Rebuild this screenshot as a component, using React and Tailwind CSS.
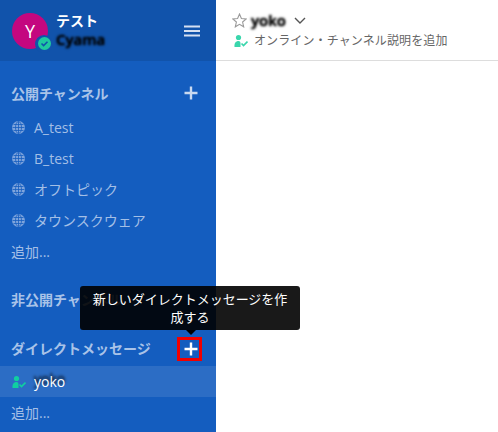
import React from 'react';

const GlobeIcon = () => (
  <svg width="13" height="13" viewBox="0 0 13 13" className="shrink-0">
    <circle cx="6.5" cy="6.5" r="6.5" fill="#7ea4dc" />
    <g stroke="#145dbf" strokeWidth="0.8" fill="none">
      <ellipse cx="6.5" cy="6.5" rx="3" ry="6" />
      <path d="M6.5 0.5V12.5M0.5 6.5H12.5M1.5 3.5H11.5M1.5 9.5H11.5" />
    </g>
  </svg>
);

const PlusIcon = ({ color = '#c9d9f0' }) => (
  <svg width="14" height="14" viewBox="0 0 14 14">
    <path d="M7 0.5V13.5M0.5 7H13.5" stroke={color} strokeWidth="2.4" />
  </svg>
);

const OnlineIcon = ({ color = '#10cfa0' }) => (
  <svg width="14" height="14" viewBox="0 0 14 14" className="shrink-0">
    <circle cx="4.5" cy="3.5" r="2.6" fill={color} />
    <path d="M0.5 13C0 9 2 7 4.5 7C6 7 6.5 8 6.5 9.5V13Z" fill={color} />
    <path d="M7.5 9.5L9.5 11.5L13.5 7.5" stroke={color} strokeWidth="1.7" fill="none" />
  </svg>
);

const channels = ['A_test', 'B_test', 'オフトピック', 'タウンスクウェア'];

const App = () => {
  return (
    <div className="relative flex h-[432px] w-[498px] overflow-hidden bg-white font-['Open_Sans','Noto_Sans_CJK_JP',sans-serif] text-[14px]">
      {/* sidebar */}
      <div className="flex w-[216px] shrink-0 flex-col bg-[#145dbf]">
        <div className="flex h-[61px] shrink-0 items-center bg-[#1153ab] pl-3 pr-4">
          <div className="relative h-9 w-9 shrink-0 rounded-full bg-[#c4077f] text-center text-[18px] leading-[36px] text-white">
            Y
            <div className="absolute left-[23px] top-[22px] flex h-[18px] w-[18px] items-center justify-center rounded-full bg-[#1153ab]">
              <svg width="13" height="13" viewBox="0 0 13 13">
                <circle cx="6.5" cy="6.5" r="6.5" fill="#1fc9a0" />
                <path d="M3.5 6.5L5.6 8.6L9.5 4.7" stroke="#1153ab" strokeWidth="1.6" fill="none" />
              </svg>
            </div>
          </div>
          <div className="mb-[3px] ml-2 flex-1">
            <div className="text-[14px] font-semibold leading-[19px] text-white">テスト</div>
            <div className="text-[15px] font-semibold leading-[18px] text-black blur-[1.2px] [text-shadow:0_0_2px_#000]">Cyama</div>
          </div>
          <svg width="16" height="12" viewBox="0 0 16 12">
            <path d="M0 1.5H16M0 6H16M0 10.5H16" stroke="#d5e0f2" strokeWidth="2" />
          </svg>
        </div>

        <div className="flex h-[51px] shrink-0 items-center justify-between pl-[11px] pr-[18px] pt-[13px]">
          <span className="text-[14px] font-bold text-[#a9c3e8]">公開チャンネル</span>
          <PlusIcon />
        </div>
        {channels.map((name) => (
          <div key={name} className="flex h-[31px] shrink-0 items-center pl-3 text-[#a3bfe6]">
            <GlobeIcon />
            <span className="ml-[9px]">{name}</span>
          </div>
        ))}
        <div className="flex h-[31px] shrink-0 items-center pl-[11px] text-[#a3bfe6]">追加...</div>

        <div className="mt-[17px] flex h-[31px] shrink-0 items-center pl-[11px] text-[14px] font-bold text-[#a9c3e8]">非公開チャンネル</div>
        <div className="mt-[18px] flex h-[31px] shrink-0 items-center justify-between pl-[11px] pr-[18px]">
          <span className="text-[14px] font-bold text-[#a9c3e8]">ダイレクトメッセージ</span>
          <PlusIcon color="#ffffff" />
        </div>
        <div className="mt-[2px] flex h-[31px] shrink-0 items-center bg-[#2c6dc5] pl-3">
          <OnlineIcon />
          <span className="ml-2 text-white [text-shadow:0_-3px_3px_#000]">yoko</span>
        </div>
        <div className="flex h-[31px] shrink-0 items-center pl-[11px] text-[#a3bfe6]">追加...</div>
      </div>

      {/* channel header */}
      <div className="flex-1">
        <div className="h-[61px] border-b border-[#dddddd] pl-4 pt-[11px]">
          <div className="flex h-[19px] items-center">
            <svg width="15" height="15" viewBox="0 0 15 15">
              <path d="M7.5 1L9.4 5.5L14.2 5.9L10.6 9L11.7 13.8L7.5 11.3L3.3 13.8L4.4 9L0.8 5.9L5.6 5.5Z" fill="none" stroke="#9a9a9a" strokeWidth="1.1" />
            </svg>
            <span className="ml-1 text-[15px] font-semibold text-black blur-[1px] [text-shadow:0_0_2px_#000]">yoko</span>
            <svg width="12" height="8" viewBox="0 0 12 8" className="ml-2">
              <path d="M1 1L6 6L11 1" fill="none" stroke="#555555" strokeWidth="1.4" />
            </svg>
          </div>
          <div className="mt-[1px] flex h-[20px] items-center pl-[2px] text-[12px] text-[#666666]">
            <OnlineIcon color="#3ad6ac" />
            <span className="ml-[6px] tracking-[0.12px]">オンライン・チャンネル説明を追加</span>
          </div>
        </div>
      </div>

      {/* tooltip */}
      <div className="absolute left-20 top-[286px] w-[220px] rounded-[3px] bg-black/90 px-2 py-1 text-center text-[13px] leading-[18px] text-white">
        新しいダイレクトメッセージを作成する
        <div className="absolute left-[106px] top-full h-0 w-0 border-x-[5px] border-t-[5px] border-x-transparent border-t-black" />
      </div>
      {/* red highlight on the add button */}
      <div className="absolute left-[177px] top-[337px] h-[24px] w-[25px] border-[3px] border-[#f00000]" />
    </div>
  );
};

export default App;
